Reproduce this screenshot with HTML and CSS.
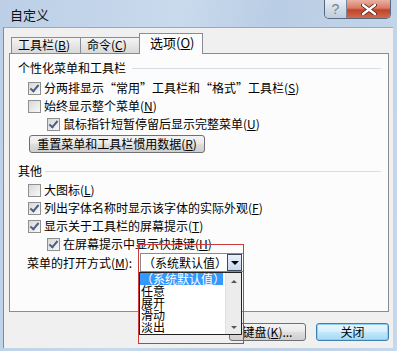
FILE: index.html
```html
<!DOCTYPE html>
<html lang="zh-CN">
<head>
  <meta charset="UTF-8">
  <title>自定义</title>
  <link rel="stylesheet" href="styles.css">
</head>
<body>
  <div class="window">
    <!-- Title bar -->
    <div class="titlebar">
      <span class="title">自定义</span>
      <div class="caption-buttons">
        <span class="cap-btn help">?</span>
        <span class="cap-btn close">
          <svg width="16" height="11" viewBox="0 0 16 11">
            <path d="M2 1 L14 10 M14 1 L2 10" stroke="#5a1a10" stroke-width="4" stroke-linecap="round"/>
            <path d="M2 1 L14 10 M14 1 L2 10" stroke="#fff" stroke-width="2.4" stroke-linecap="round"/>
          </svg>
        </span>
      </div>
    </div>

    <!-- Client area -->
    <div class="client">
      <div class="tabs">
        <div class="tab">工具栏(<u>B</u>)</div>
        <div class="tab">命令(<u>C</u>)</div>
        <div class="tab active">选项(<u>O</u>)</div>
      </div>

      <div class="panel">
        <div class="group-title">个性化菜单和工具栏</div>
        <div class="row"><span class="check on"></span>分两排显示“常用”工具栏和“格式”工具栏(<u>S</u>)</div>
        <div class="row"><span class="check"></span>始终显示整个菜单(<u>N</u>)</div>
        <div class="row sub"><span class="check on"></span>鼠标指针短暂停留后显示完整菜单(<u>U</u>)</div>
        <div class="reset-btn">重置菜单和工具栏惯用数据(<u>R</u>)</div>

        <div class="group-title other">其他</div>
        <div class="row"><span class="check"></span>大图标(<u>L</u>)</div>
        <div class="row"><span class="check on"></span>列出字体名称时显示该字体的实际外观(<u>F</u>)</div>
        <div class="row"><span class="check on"></span>显示关于工具栏的屏幕提示(<u>T</u>)</div>
        <div class="row sub"><span class="check on"></span>在屏幕提示中显示快捷键(<u>H</u>)</div>

        <div class="combo-row">
          <span class="combo-label">菜单的打开方式(<u>M</u>):</span>
          <div class="combo">
            <span class="combo-text">（系统默认值）</span>
            <span class="combo-arrow"></span>
            <!-- open list -->
            <div class="dropdown">
              <div class="items">
                <div class="item selected">（系统默认值）</div>
                <div class="item">任意</div>
                <div class="item">展开</div>
                <div class="item">滑动</div>
                <div class="item">淡出</div>
              </div>
              <div class="scrollbar">
                <span class="arrow up"></span>
                <span class="arrow down"></span>
              </div>
            </div>
          </div>
        </div>
      </div>

      <div class="buttons">
        <div class="btn">键盘(<u>K</u>)...</div>
        <div class="btn default">关闭</div>
      </div>
    </div>

    <div class="annotation"></div>
  </div>
</body>
</html>
```

FILE: styles.css
```css
body {
  margin: 0;
  padding: 0;
  font-family: "Noto Sans CJK SC", "Liberation Sans", sans-serif;
  font-size: 12px;
  color: #000;
  background: #fff;
}

u {
  text-decoration: underline;
  text-underline-offset: 1px;
}

.window {
  position: relative;
  width: 397px;
  height: 351px;
  display: flex;
  flex-direction: column;
  background: linear-gradient(100deg, #bccfe6 0%, #c9daed 40%, #b9cde4 60%, #c7d8eb 100%);
  overflow: hidden;
}

/* Title bar */
.titlebar {
  height: 27px;
  display: flex;
  justify-content: space-between;
  align-items: flex-start;
  flex-shrink: 0;
}

.title {
  padding: 7px 0 0 10px;
  font-size: 13px;
  line-height: 15px;
  color: #111;
}

.caption-buttons {
  display: flex;
  margin-right: 6px;
  border: 1px solid #56677e;
  border-top: none;
  border-radius: 0 0 5px 5px;
  overflow: hidden;
  height: 18px;
}

.cap-btn {
  display: flex;
  align-items: center;
  justify-content: center;
  height: 18px;
}

.cap-btn.help {
  width: 21px;
  border-right: 1px solid #7a8698;
  background: linear-gradient(#e9eff6, #d2dde9 50%, #bfcddd);
  color: #7a8390;
  font-family: "Liberation Sans", sans-serif;
  font-size: 14px;
}

.cap-btn.close {
  width: 43px;
  background: linear-gradient(#eab1a2, #d87a64 45%, #c0432a 55%, #d26a4e);
}

/* Client */
.client {
  flex: 1;
  margin: 0 4px 3px 3px;
  padding: 5px 4px 0 5px;
  background: #f0f0f0;
  border-left: 1px solid #7f8b9a;
  border-top: 1px solid #9aa8b8;
  display: flex;
  flex-direction: column;
}

.tabs {
  display: flex;
  align-items: flex-end;
  height: 20px;
  padding-left: 2px;
}

.tab {
  box-sizing: border-box;
  height: 16px;
  padding: 0 6px;
  border: 1px solid #898c95;
  border-bottom: none;
  background: linear-gradient(#f4f4f4, #e6e6e6 50%, #d9d9d9);
  line-height: 14px;
  white-space: nowrap;
}

.tab + .tab {
  margin-left: -1px;
}

.tab:nth-child(1) { width: 70px; }
.tab:nth-child(2) { width: 60px; }

.tab.active {
  position: relative;
  z-index: 1;
  height: 21px;
  width: 64px;
  margin-bottom: -1px;
  padding: 2px 10px 0;
  background: #fcfcfc;
  font-size: 13px;
}

.panel {
  box-sizing: border-box;
  height: 259px;
  padding: 5px 7px 0 8px;
  border: 1px solid #898c95;
  background: #fcfcfc;
}

.group-title {
  display: flex;
  align-items: center;
  gap: 6px;
  height: 18px;
  line-height: 18px;
  margin-bottom: 2px;
}

.group-title::after {
  content: "";
  flex: 1;
  border-top: 1px solid #d5dfe5;
}

.group-title.other {
  margin-top: 9px;
  margin-bottom: 1px;
  gap: 3px;
}

.row {
  display: flex;
  align-items: center;
  height: 18px;
  line-height: 18px;
  white-space: nowrap;
}

.check {
  box-sizing: border-box;
  width: 13px;
  height: 13px;
  margin: 0 3px 0 10px;
  border: 1px solid #8e8f8f;
  background: linear-gradient(135deg, #d8d8d8, #f8f8f8);
  flex-shrink: 0;
  position: relative;
}

.row.sub .check {
  margin-left: 29px;
}

.check.on::after {
  content: "";
  position: absolute;
  left: 3px;
  top: 0px;
  width: 3px;
  height: 7px;
  border: solid #4e5f86;
  border-width: 0 2px 2px 0;
  transform: rotate(40deg);
}

.reset-btn {
  box-sizing: border-box;
  width: 176px;
  height: 18px;
  margin: 2px 0 0 11px;
  border: 1px solid #707070;
  border-radius: 3px;
  background: linear-gradient(#f3f3f3, #ebebeb 45%, #dcdcdc 55%, #cfcfcf);
  line-height: 16px;
  text-align: center;
  white-space: nowrap;
}

.combo-row {
  display: flex;
  align-items: center;
  height: 19px;
}

.combo-label {
  width: 113px;
  padding-left: 9px;
  flex-shrink: 0;
  white-space: nowrap;
}

.combo {
  position: relative;
  box-sizing: border-box;
  width: 104px;
  height: 19px;
  border: 1px solid #8a8a8a;
  background: #fff;
  display: flex;
  align-items: center;
}

.combo-text {
  flex: 1;
  padding-left: 2px;
  line-height: 17px;
  white-space: nowrap;
}

.combo-arrow {
  box-sizing: border-box;
  width: 16px;
  height: 17px;
  margin-right: 1px;
  border: 1px solid #3d4a5c;
  background: linear-gradient(#e9f1fa, #c6d8ec);
  position: relative;
}

.combo-arrow::after {
  content: "";
  position: absolute;
  left: 3px;
  top: 6px;
  border-left: 4px solid transparent;
  border-right: 4px solid transparent;
  border-top: 4px solid #000;
}

.dropdown {
  position: absolute;
  left: -2px;
  top: 18px;
  z-index: 2;
  box-sizing: border-box;
  width: 103px;
  height: 63px;
  border: 1px solid #222;
  background: #fff;
  display: flex;
}

.items {
  flex: 1;
}

.item {
  height: 12px;
  line-height: 12px;
  padding-left: 1px;
  white-space: nowrap;
}

.item.selected {
  width: 82px;
  background: #3399ff;
  color: #fff;
}

.scrollbar {
  width: 15px;
  border-left: 1px solid #e0e0e0;
  background: #ececec;
  display: flex;
  flex-direction: column;
  justify-content: space-between;
  align-items: center;
  padding: 7px 0 5px;
}

.arrow {
  width: 0;
  height: 0;
  border-left: 3px solid transparent;
  border-right: 3px solid transparent;
}

.arrow.up { border-bottom: 3px solid #555; }
.arrow.down { border-top: 3px solid #555; }

.buttons {
  display: flex;
  justify-content: flex-end;
  gap: 10px;
  margin-top: 11px;
}

.btn {
  box-sizing: border-box;
  width: 77px;
  height: 18px;
  border: 1px solid #707070;
  border-radius: 3px;
  background: linear-gradient(#f3f3f3, #ebebeb 45%, #dcdcdc 55%, #cfcfcf);
  line-height: 16px;
  text-align: center;
  white-space: nowrap;
}

.btn.default {
  width: 73px;
  border-color: #3c7fb1;
  box-shadow: inset 0 0 0 1px #8fd0f2;
  background: linear-gradient(#eaf6fd, #d9f0fc 45%, #bee6fd 55%, #a7d9f5);
}

.annotation {
  position: absolute;
  left: 138px;
  top: 244px;
  width: 104px;
  height: 98px;
  border: 1px solid #cf3a3a;
  z-index: 3;
}
```
